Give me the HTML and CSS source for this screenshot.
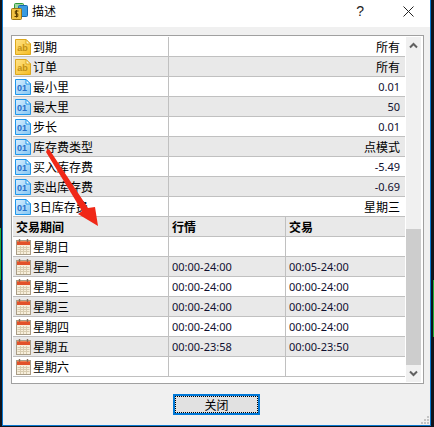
FILE: index.html
```html
<!DOCTYPE html>
<html lang="zh">
<head>
<meta charset="utf-8">
<title>描述</title>
<link rel="stylesheet" href="styles.css">
</head>
<body>
<svg class="defs" width="0" height="0" aria-hidden="true">
  <defs>
    <linearGradient id="gy" x1="0" y1="0" x2="1" y2="1"><stop offset="0" stop-color="#ffe48a"/><stop offset="1" stop-color="#f6bc22"/></linearGradient>
    <linearGradient id="gb" x1="0" y1="0" x2="1" y2="1"><stop offset="0" stop-color="#d8efff"/><stop offset="1" stop-color="#86c6f2"/></linearGradient>
    <symbol id="i-ab" viewBox="0 0 16 16">
      <path d="M.5.5H11L15.5 5V15.500H.5Z" fill="url(#gy)" stroke="#dca81e"/>
      <path d="M11 .5V5H15.500Z" fill="#fff6c8" stroke="#dca81e"/>
      <text x="7.500" y="12" text-anchor="middle" class="icon-ab">ab</text>
    </symbol>
    <symbol id="i-01" viewBox="0 0 16 16">
      <path d="M.5.5H11L15.500 5V15.500H.5Z" fill="url(#gb)" stroke="#1f96ea"/>
      <path d="M11 .5V5H15.500Z" fill="#fff" stroke="#1f96ea"/>
      <text x="7" y="12" text-anchor="middle" class="icon-01">01</text>
    </symbol>
    <symbol id="i-cal" viewBox="0 0 15 16">
      <rect x=".5" y="1.500" width="14" height="14" fill="#f7efdc" stroke="#a89c86"/>
      <rect x="1" y="2" width="13" height="4" fill="#e2522a"/>
      <path d="M1 2H14V3H1Z" fill="#f08050"/>
      <path d="M3.500 0V3M11.500 0V3" stroke="#8a6a58" stroke-width="1.400"/>
      <path d="M1.500 8.500H13.500M1.500 10.500H13.500M1.500 12.500H13.500M4.500 7V15M7.500 7V15M10.500 7V15" stroke="#d8ccb0" fill="none"/>
    </symbol>
  </defs>
</svg>

<div class="window">
  <header class="titlebar">
    <svg class="app-icon" width="17" height="17" viewBox="0 0 17 17" aria-hidden="true">
      <rect x="3.500" y=".5" width="9" height="9" rx="1" fill="#9fd89f" stroke="#2f9a3a"/>
      <rect x="7.500" y="2.500" width="9" height="11" rx="1" fill="#3a9be0" stroke="#1568b0"/>
      <rect x=".5" y="5.500" width="10" height="11" rx="1" fill="#f2c243" stroke="#9a7414"/>
      <path d="M7.500 8H4.300V10.800H6.800V13.500H3.500M5.500 7V14.500" stroke="#5a3c00" fill="none"/>
    </svg>
    <span class="title-text">描述</span>
    <span class="help">?</span>
    <svg class="close" width="11" height="11" viewBox="0 0 11 11" aria-hidden="true"><path d="M.5.5L10.500 10.500M10.500.5L.5 10.500" stroke="#222" fill="none"/></svg>
  </header>

  <main class="content">
    <div class="listbox">
      <div class="table">
        <div class="row two"><div class="name"><svg class="ico"><use href="#i-ab"/></svg>到期</div><div class="val">所有</div></div>
        <div class="row two alt"><div class="name"><svg class="ico"><use href="#i-ab"/></svg>订单</div><div class="val">所有</div></div>
        <div class="row two"><div class="name"><svg class="ico"><use href="#i-01"/></svg>最小里</div><div class="val num">0.01</div></div>
        <div class="row two alt"><div class="name"><svg class="ico"><use href="#i-01"/></svg>最大里</div><div class="val num">50</div></div>
        <div class="row two"><div class="name"><svg class="ico"><use href="#i-01"/></svg>步长</div><div class="val num">0.01</div></div>
        <div class="row two alt"><div class="name"><svg class="ico"><use href="#i-01"/></svg>库存费类型</div><div class="val">点模式</div></div>
        <div class="row two"><div class="name"><svg class="ico"><use href="#i-01"/></svg>买入库存费</div><div class="val num">-5.49</div></div>
        <div class="row two alt"><div class="name"><svg class="ico"><use href="#i-01"/></svg>卖出库存费</div><div class="val num">-0.69</div></div>
        <div class="row two"><div class="name"><svg class="ico"><use href="#i-01"/></svg>3日库存费</div><div class="val">星期三</div></div>
        <div class="row three alt head"><div class="name">交易期间</div><div class="cell">行情</div><div class="cell last">交易</div></div>
        <div class="row three"><div class="name"><svg class="ico cal"><use href="#i-cal"/></svg>星期日</div><div class="cell num"></div><div class="cell last num"></div></div>
        <div class="row three alt"><div class="name"><svg class="ico cal"><use href="#i-cal"/></svg>星期一</div><div class="cell num">00:00-24:00</div><div class="cell last num">00:05-24:00</div></div>
        <div class="row three"><div class="name"><svg class="ico cal"><use href="#i-cal"/></svg>星期二</div><div class="cell num">00:00-24:00</div><div class="cell last num">00:00-24:00</div></div>
        <div class="row three alt"><div class="name"><svg class="ico cal"><use href="#i-cal"/></svg>星期三</div><div class="cell num">00:00-24:00</div><div class="cell last num">00:00-24:00</div></div>
        <div class="row three"><div class="name"><svg class="ico cal"><use href="#i-cal"/></svg>星期四</div><div class="cell num">00:00-24:00</div><div class="cell last num">00:00-24:00</div></div>
        <div class="row three alt"><div class="name"><svg class="ico cal"><use href="#i-cal"/></svg>星期五</div><div class="cell num">00:00-23:58</div><div class="cell last num">00:00-23:50</div></div>
        <div class="row three"><div class="name"><svg class="ico cal"><use href="#i-cal"/></svg>星期六</div><div class="cell num"></div><div class="cell last num"></div></div>
      </div>
      <div class="scrollbar">
        <div class="sb-btn"><svg width="9" height="7" viewBox="0 0 9 7" aria-hidden="true"><path d="M1 5.500L4.500 2L8 5.500" stroke="#606060" stroke-width="2" fill="none"/></svg></div>
        <div class="sb-space"></div>
        <div class="sb-thumb"></div>
        <div class="sb-btn"><svg width="9" height="7" viewBox="0 0 9 7" aria-hidden="true"><path d="M1 1.500L4.500 5L8 1.500" stroke="#606060" stroke-width="2" fill="none"/></svg></div>
      </div>
    </div>
    <div class="footer">
      <button class="btn" type="button"><span class="btn-focus">关闭</span></button>
    </div>
  </main>

  <svg class="grip" width="9" height="9" viewBox="0 0 9 9" aria-hidden="true">
    <path d="M6 0h2v2H6zM3 3h2v2H3zM6 3h2v2H6zM0 6h2v2H0zM3 6h2v2H3zM6 6h2v2H6z" fill="#c4c4c4"/>
  </svg>
</div>

<svg class="arrow" width="70" height="90" viewBox="0 0 70 90" aria-hidden="true">
  <path d="M2 2L4 1L43 60L50 59L53 78L33 66L37 63L1 4Z" fill="#f02818"/>
</svg>
</body>
</html>
```

FILE: styles.css
```css
html, body {
  margin: 0;
  height: 427px;
  overflow: hidden;
}
body {
  position: relative;
  background:
    linear-gradient(#1fae3a, #1fae3a) 0 228px / 1px 52px no-repeat,
    linear-gradient(#1fae3a, #1fae3a) 433px 280px / 1px 57px no-repeat,
    #10141c;
  font-family: "Noto Sans CJK SC", "Liberation Sans", sans-serif;
  font-size: 12px;
  color: #000;
}
.defs { position: absolute; }
.window {
  position: relative;
  box-sizing: border-box;
  width: 429px;
  height: 426px;
  margin-left: 2px;
  border: 1px solid #0a78d0;
  border-top: 0;
  background: #f0f0f0;
  display: flex;
  flex-direction: column;
}
.titlebar {
  height: 27px;
  flex: none;
  background: #fff;
  display: flex;
  align-items: center;
  padding: 0 16px 5px 8px;
  box-sizing: border-box;
}
.app-icon { flex: none; }
.title-text { margin-left: 4px; line-height: 16px; }
.help { margin-left: auto; margin-right: 39px; font: 14px "Liberation Sans", sans-serif; color: #222; }
.close { flex: none; }
.content {
  flex: 1;
  padding: 8px 6px 0 8px;
  display: flex;
  flex-direction: column;
}
.listbox {
  box-sizing: border-box;
  height: 349px;
  border: 1px solid #a0a0a0;
  background: #fff;
  padding: 1px 2px 1px 1px;
  display: flex;
}
.table { width: 392px; flex: none; }
.row {
  display: grid;
  height: 20px;
  box-sizing: border-box;
  border-bottom: 1px solid #c0c0c0;
  background: #fff;
  line-height: 19px;
}
.row.alt { background: #e9e9e9; }
.row.two { grid-template-columns: 156px 1fr; }
.row.three { grid-template-columns: 156px 117px 1fr; }
.name {
  display: flex;
  align-items: center;
  padding-left: 2px;
  border-right: 1px solid #c0c0c0;
  white-space: nowrap;
}
.ico { width: 16px; height: 16px; margin-right: 2px; flex: none; }
.ico.cal { width: 15px; margin: 0 2px 0 1px; }
.val { text-align: right; padding-right: 5px; }
.cell { padding-left: 3px; border-right: 1px solid #c0c0c0; }
.cell.last { border-right: 0; }
.num { font-family: "Noto Sans", "Liberation Sans", sans-serif; font-size: 11px; color: #101030; }
.head { font-weight: 700; }
.head .name { padding-left: 3px; }
.icon-ab { font: 700 9px "Liberation Sans", sans-serif; fill: #c08f14; }
.icon-01 { font: 700 9px "Liberation Sans", sans-serif; fill: #2a70c8; }
.scrollbar {
  width: 16px;
  margin-left: 1px;
  background: #f0f0f0;
  display: flex;
  flex-direction: column;
  height: 345px;
}
.sb-btn { height: 17px; flex: none; display: flex; align-items: center; justify-content: center; }
.sb-space { height: 175px; flex: none; }
.sb-thumb { height: 136px; flex: none; background: #cdcdcd; }
.footer {
  display: flex;
  justify-content: center;
  padding: 10px 2px 0 0;
}
.btn {
  box-sizing: border-box;
  width: 87px;
  height: 21px;
  padding: 0;
  border: 2px solid #0078d7;
  background: #e1e1e1;
  font: inherit;
  color: #000;
  display: flex;
}
.btn-focus {
  flex: 1;
  border: 1px dotted #000;
  display: flex;
  align-items: center;
  justify-content: center;
}
.grip { position: absolute; right: 0; bottom: 0; }
.arrow { position: absolute; left: 45px; top: 148px; }
```
